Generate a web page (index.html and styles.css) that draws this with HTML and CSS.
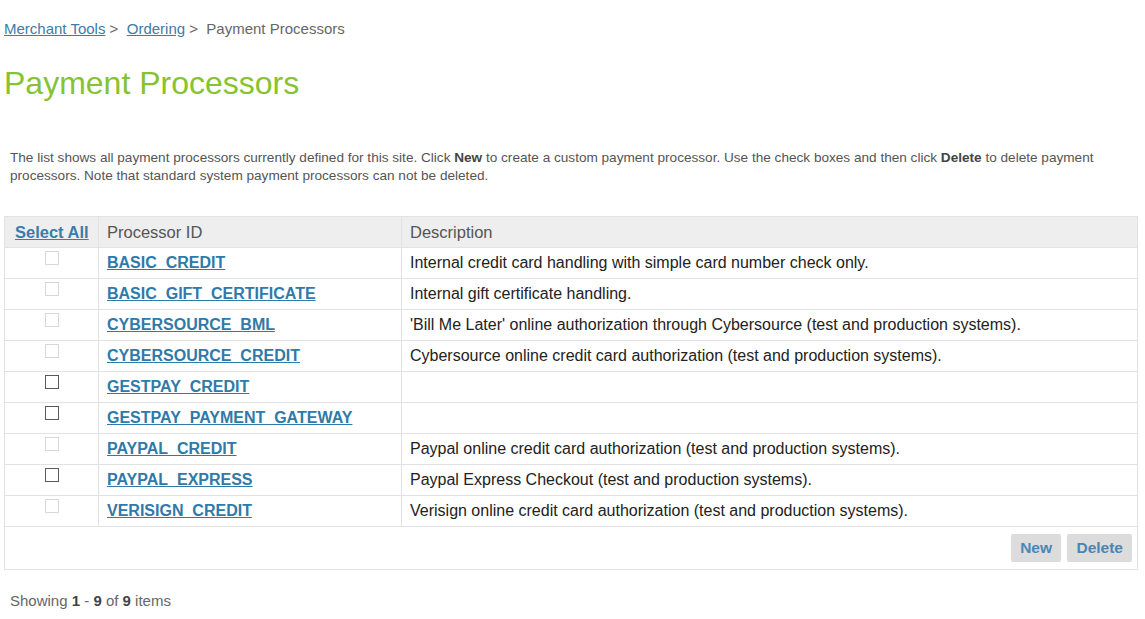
FILE: index.html
```html
<!DOCTYPE html>
<html lang="en">
<head>
  <meta charset="UTF-8">
  <meta name="viewport" content="width=device-width, initial-scale=1.0">
  <title>Payment Processors</title>
  <link rel="stylesheet" href="styles.css">
</head>
<body>
  <div class="page">
    <div class="breadcrumb">
      <a href="#">Merchant Tools</a> &gt;&nbsp; <a href="#">Ordering</a> &gt;&nbsp; Payment Processors
    </div>

    <h1>Payment Processors</h1>

    <p class="intro">
      The list shows all payment processors currently defined for this site. Click <b>New</b> to create a custom payment processor. Use the check boxes and then click <b>Delete</b> to delete payment processors. Note that standard system payment processors can not be deleted.
    </p>

    <table class="grid">
      <thead>
        <tr>
          <th class="col-check"><a href="#">Select All</a></th>
          <th class="col-id">Processor ID</th>
          <th>Description</th>
        </tr>
      </thead>
      <tbody>
        <tr>
          <td class="col-check"><input type="checkbox" disabled></td>
          <td><a href="#">BASIC_CREDIT</a></td>
          <td>Internal credit card handling with simple card number check only.</td>
        </tr>
        <tr>
          <td class="col-check"><input type="checkbox" disabled></td>
          <td><a href="#">BASIC_GIFT_CERTIFICATE</a></td>
          <td>Internal gift certificate handling.</td>
        </tr>
        <tr>
          <td class="col-check"><input type="checkbox" disabled></td>
          <td><a href="#">CYBERSOURCE_BML</a></td>
          <td>'Bill Me Later' online authorization through Cybersource (test and production systems).</td>
        </tr>
        <tr>
          <td class="col-check"><input type="checkbox" disabled></td>
          <td><a href="#">CYBERSOURCE_CREDIT</a></td>
          <td>Cybersource online credit card authorization (test and production systems).</td>
        </tr>
        <tr>
          <td class="col-check"><input type="checkbox"></td>
          <td><a href="#">GESTPAY_CREDIT</a></td>
          <td></td>
        </tr>
        <tr>
          <td class="col-check"><input type="checkbox"></td>
          <td><a href="#">GESTPAY_PAYMENT_GATEWAY</a></td>
          <td></td>
        </tr>
        <tr>
          <td class="col-check"><input type="checkbox" disabled></td>
          <td><a href="#">PAYPAL_CREDIT</a></td>
          <td>Paypal online credit card authorization (test and production systems).</td>
        </tr>
        <tr>
          <td class="col-check"><input type="checkbox"></td>
          <td><a href="#">PAYPAL_EXPRESS</a></td>
          <td>Paypal Express Checkout (test and production systems).</td>
        </tr>
        <tr>
          <td class="col-check"><input type="checkbox" disabled></td>
          <td><a href="#">VERISIGN_CREDIT</a></td>
          <td>Verisign online credit card authorization (test and production systems).</td>
        </tr>
      </tbody>
      <tfoot>
        <tr>
          <td colspan="3" class="actions">
            <button>New</button>
            <button>Delete</button>
          </td>
        </tr>
      </tfoot>
    </table>

    <div class="paging">Showing <b>1</b> - <b>9</b> of <b>9</b> items</div>
  </div>
</body>
</html>
```

FILE: styles.css
```css
body {
  margin: 0;
  font-family: "Liberation Sans", Arial, sans-serif;
  background: #ffffff;
  color: #333;
}
.page {
  padding: 20px 7px 0 4px;
}
.breadcrumb {
  font-size: 15px;
  line-height: 17px;
  color: #666;
}
.breadcrumb a {
  color: #3b7ca8;
}
h1 {
  margin: 28px 0 0 0;
  font-size: 32px;
  line-height: 36px;
  font-weight: normal;
  color: #86c331;
}
.intro {
  margin: 48px 0 0 6px;
  padding-right: 30px;
  font-size: 13.6px;
  line-height: 18px;
  color: #555;
}
.intro b {
  color: #444;
}
.grid {
  width: 100%;
  margin-top: 31px;
  border-collapse: collapse;
  border: 1px solid #dcdcdc;
  font-size: 16px;
  line-height: 20px;
}
.grid th,
.grid td {
  height: 30px;
  padding: 0 8px;
  border: 1px solid #e2e2e2;
  text-align: left;
  vertical-align: middle;
}
.grid th {
  background: #eeeeee;
  color: #555;
  font-weight: normal;
  font-size: 16.5px;
}
.grid th.col-check {
  width: 75px;
  padding: 0 8px 0 10px;
}
.grid th.col-check a {
  font-weight: bold;
  color: #3b7ca8;
}
.grid .col-id {
  width: 286px;
}
.grid td {
  color: #222;
}
.grid td a {
  color: #2f7aa8;
  font-weight: bold;
}
.grid td.col-check {
  vertical-align: top;
  padding: 3px 0 0 0;
  height: 27px;
}
.grid input[type="checkbox"] {
  appearance: none;
  display: block;
  width: 14px;
  height: 14px;
  margin: 0 auto;
  border: 1px solid #5a5a5a;
  background: #fff;
}
.grid input[type="checkbox"]:disabled {
  border-color: #d8d8d8;
}
.grid .actions {
  height: 42px;
  text-align: right;
  padding: 0 5px;
  border-top: 1px solid #e2e2e2;
}
.actions button {
  height: 28px;
  padding: 0 9px;
  margin-left: 2px;
  border: none;
  border-radius: 2px;
  background: #dcdcdc;
  color: #4a86b5;
  font-family: "Liberation Sans", Arial, sans-serif;
  font-size: 15.5px;
  font-weight: bold;
}
.paging {
  margin: 22px 0 0 6px;
  font-size: 15px;
  color: #666;
}
.paging b {
  color: #444;
}
```
